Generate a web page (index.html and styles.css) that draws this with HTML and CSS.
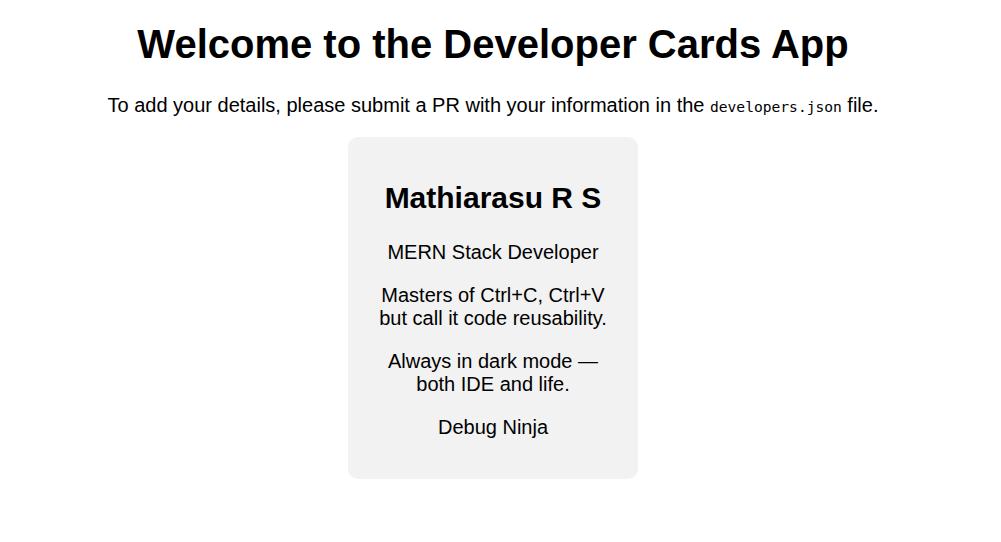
FILE: index.html
```html
<!DOCTYPE html>
<html lang="en">
<head>
<meta charset="utf-8">
<title>Developer Cards App</title>
<link rel="stylesheet" href="styles.css">
</head>
<body>
<div class="app">
  <h1 class="title">Welcome to the Developer Cards App</h1>
  <p class="intro">To add your details, please submit a PR with your information in the <code class="file">developers.json</code> file.</p>
  <div class="cards">
    <div class="card">
      <h2 class="card-name">Mathiarasu R S</h2>
      <p class="card-line">MERN Stack Developer</p>
      <p class="card-line">Masters of Ctrl+C, Ctrl+V but call it code reusability.</p>
      <p class="card-line">Always in dark mode — both IDE and life.</p>
      <p class="card-line">Debug Ninja</p>
    </div>
  </div>
</div>
</body>
</html>
```

FILE: styles.css
```css
html, body {
  margin: 0;
  padding: 0;
  background: #ffffff;
}

body {
  font-family: "Liberation Sans", Arial, sans-serif;
  color: #000000;
}

.app {
  padding: 0 15px 0 0;
  text-align: center;
}

.title {
  font-size: 40px;
  font-weight: bold;
  margin: 21px 0 0;
  line-height: 46px;
}

.intro {
  font-size: 20px;
  line-height: 23px;
  margin: 27px 0 19px;
}

.file {
  font-family: "DejaVu Sans Mono", monospace;
  font-size: 14.6px;
}

.cards {
  display: flex;
  justify-content: center;
}

.card {
  width: 250px;
  padding: 20px;
  background: #f2f2f2;
  border-radius: 10px;
  font-size: 20px;
}

.card-name {
  font-size: 30px;
  font-weight: bold;
  margin: 24px 0 26px;
  line-height: 34px;
}

.card-line {
  margin: 20px 0;
  line-height: 23px;
}

.card-name + .card-line {
  margin-top: 0;
}
```
